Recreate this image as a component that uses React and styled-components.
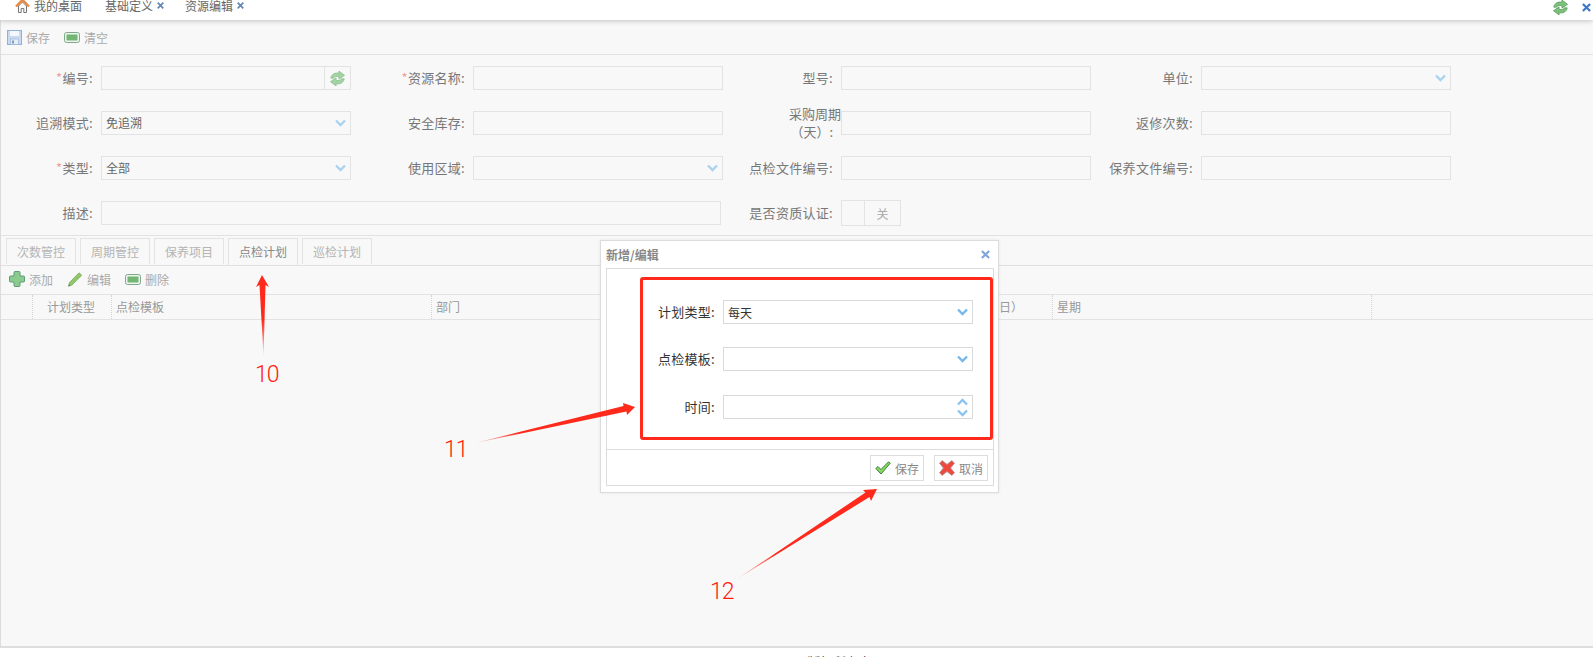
import React from 'react';
import styled, { createGlobalStyle } from 'styled-components';

const font = `"Noto Sans CJK SC", "Noto Sans", "Liberation Sans", sans-serif`;
const panel = '#f8f8f8';

const Global = createGlobalStyle`
  html, body { margin: 0; padding: 0; background: #fff; overflow: hidden; }
  * { box-sizing: border-box; }
  body { font-family: ${font}; font-size: 12px; }
`;

const Page = styled.div`
  position: relative;
  width: 1593px;
  height: 657px;
  display: flex;
  flex-direction: column;
  overflow: hidden;
`;

const TopBar = styled.header`
  position: relative;
  z-index: 2;
  flex: 0 0 20px;
  display: flex;
  justify-content: space-between;
  align-items: flex-start;
  background: #fff;
  box-shadow: 0 1px 5px rgba(0, 0, 0, 0.22);
  overflow: hidden;
`;
const TopTabs = styled.div`
  display: flex;
  align-items: flex-start;
  padding-left: 15px;
`;
const TopTab = styled.div`
  display: flex;
  align-items: center;
  gap: 4px;
  width: ${p => p.$w}px;
  height: 11px;
  line-height: 11px;
  color: #666;
  font-size: 12px;
  white-space: nowrap;
`;
const TopTools = styled.div`
  display: flex;
  align-items: center;
  gap: 13px;
  padding-right: 2px;
  height: 14px;
`;

const Main = styled.main`
  flex: 1;
  display: flex;
  flex-direction: column;
  min-height: 0;
  background: ${panel};
  border-left: 1px solid #dcdcdc;
  border-bottom: 2px solid #dedede;
`;
const Toolbar = styled.div`
  display: flex;
  align-items: center;
  gap: 14px;
  flex: 0 0 ${p => p.$h}px;
  padding-left: ${p => p.$pad}px;
  padding-bottom: ${p => p.$lift || 0}px;
  border-bottom: 1px solid #e2e2e2;
`;
const ToolButton = styled.div`
  display: flex;
  align-items: center;
  gap: 4px;
  color: #aaa;
  font-size: 12px;
`;

const Form = styled.section`
  display: grid;
  grid-template-columns: 100px 250px 122px 250px 118px 250px 110px 250px;
  grid-auto-rows: 24px;
  row-gap: 21px;
  padding: 11px 0 10px;
  border-bottom: 1px solid #e2e2e2;
`;
const Label = styled.label`
  display: flex;
  align-items: center;
  justify-content: flex-end;
  padding: 0 8px 1px 0;
  font-size: 13px;
  letter-spacing: 0.3px;
  color: #777;
  white-space: nowrap;
`;
const Star = styled.span`
  color: #f59a9a;
`;
const WrapLabel = styled.span`
  display: block;
  text-align: right;
  line-height: 18px;
  letter-spacing: 0;
`;
const WrapFirst = styled.span`
  display: block;
  margin-right: -8px;
`;
const Input = styled.div`
  display: flex;
  align-items: center;
  justify-content: space-between;
  height: 24px;
  padding: 0 4px 1px 4px;
  border: 1px solid #e3e3e3;
  background: ${panel};
  color: #666;
  font-size: 12px;
`;
const WideInput = styled(Input)`
  grid-column: span 3;
  width: 620px;
`;
const AddonInput = styled(Input)`
  padding: 0;
`;
const Addon = styled.div`
  display: flex;
  align-items: center;
  justify-content: center;
  width: 26px;
  height: 100%;
  border-left: 1px solid #e3e3e3;
`;
const Switch = styled.div`
  display: flex;
  width: 60px;
  height: 26px;
  margin-top: -1px;
  border: 1px solid #e3e3e3;
  color: #aaa;
  font-size: 12px;
`;
const SwitchKnob = styled.div`
  width: 23px;
  border-right: 1px solid #e3e3e3;
`;
const SwitchText = styled.div`
  flex: 1;
  display: flex;
  align-items: center;
  justify-content: center;
`;

const TabBar = styled.nav`
  display: flex;
  align-items: flex-start;
  gap: 4px;
  padding: 2px 0 0 5px;
  border-bottom: 1px solid #e0e0e0;
  flex: 0 0 29px;
`;
const Tab = styled.div`
  display: flex;
  align-items: center;
  justify-content: center;
  flex: 0 0 70px;
  height: ${p => (p.$active ? 27 : 26)}px;
  padding-bottom: ${p => (p.$active ? 2 : 1)}px;
  border: 1px solid #e3e3e3;
  border-bottom: none;
  background: ${panel};
  color: ${p => (p.$active ? '#888' : '#b4b4b4')};
  font-size: 12px;
`;

const HeadRow = styled.div`
  display: grid;
  grid-template-columns: 32px 79px 320px 527px 94px 319px 1fr;
  flex: 0 0 25px;
  border-bottom: 1px solid #e2e2e2;
`;
const HeadCell = styled.div`
  display: flex;
  align-items: center;
  justify-content: ${p => (p.$center ? 'center' : 'flex-start')};
  padding: 0 ${p => (p.$center ? 2 : 0)}px 1px ${p => (p.$center ? 0 : 4)}px;
  color: #999;
  font-size: 12px;
  border-right: ${p => (p.$last ? 'none' : '1px dotted #d5d5d5')};
  white-space: nowrap;
`;

const Footer = styled.footer`
  flex: 0 0 9px;
  min-height: 0;
  overflow: hidden;
  background: #fff;
  padding: 7px 0 0 807px;
  line-height: 14px;
  font-size: 13px;
  color: #444;
  white-space: nowrap;
`;

const Dialog = styled.div`
  position: absolute;
  z-index: 3;
  left: 600px;
  top: 240px;
  width: 399px;
  height: 253px;
  display: flex;
  flex-direction: column;
  padding: 0 4px 6px 5px;
  background: #fff;
  border: 1px solid #dcdcdc;
  box-shadow: 0 0 3px rgba(0, 0, 0, 0.08);
`;
const DialogHead = styled.div`
  flex: 0 0 27px;
  display: flex;
  align-items: center;
  justify-content: space-between;
  padding: 0 4px 0 0;
  font-size: 12px;
  font-weight: 700;
  color: #888;
`;
const DialogBody = styled.div`
  flex: 1;
  display: flex;
  flex-direction: column;
  border: 1px solid #dcdcdc;
`;
const Fields = styled.div`
  flex: 0 0 181px;
  display: flex;
  flex-direction: column;
  padding-top: 31px;
  gap: 23px;
  border-bottom: 1px solid #dcdcdc;
`;
const Field = styled.div`
  display: flex;
  height: 24px;
  margin-top: ${p => p.$nudge || 0}px;
`;
const FieldLabel = styled.label`
  flex: 0 0 116px;
  display: flex;
  align-items: center;
  justify-content: flex-end;
  padding: 0 8px 2px 0;
  font-size: 13px;
  letter-spacing: 0.3px;
  color: #333;
`;
const FieldInput = styled.div`
  width: 250px;
  height: 24px;
  display: flex;
  align-items: center;
  justify-content: space-between;
  padding: 0 4px;
  border: 1px solid #d9d9d9;
  color: #333;
  font-size: 12px;
`;
const Spinner = styled.div`
  display: flex;
  flex-direction: column;
  gap: 3px;
`;
const DialogFoot = styled.div`
  flex: 1;
  display: flex;
  justify-content: flex-end;
  align-items: flex-start;
  gap: 10px;
  padding: 5px 5px 0 0;
`;
const DialogButton = styled.button`
  display: flex;
  align-items: center;
  justify-content: center;
  gap: 4px;
  width: 54px;
  height: 26px;
  padding: 0;
  background: #fff;
  border: 1px solid #dcdcdc;
  color: #888;
  font-family: inherit;
  font-size: 12px;
`;

const Callout = styled.div`
  position: absolute;
  z-index: 4;
  left: 640px;
  top: 277px;
  width: 353px;
  height: 163px;
  border: 3px solid #ff2a1c;
  border-radius: 3px;
`;
const ArrowLayer = styled.svg`
  position: absolute;
  z-index: 4;
  left: 0;
  top: 0;
  pointer-events: none;
`;
const Num = styled.div`
  position: absolute;
  z-index: 4;
  left: ${p => p.$x}px;
  top: ${p => p.$y}px;
  color: #ff1a0a;
  font-family: Roboto, "Liberation Sans", sans-serif;
  font-weight: 300;
  font-size: 23px;
  line-height: 24px;
  letter-spacing: -1px;
`;

const Chevron = ({ color = '#a9d3f0', up }) => (
  <svg width="11" height="8" viewBox="0 0 11 8">
    <polyline
      points={up ? '1,6.5 5.5,2 10,6.5' : '1,1.5 5.5,6 10,1.5'}
      fill="none"
      stroke={color}
      strokeWidth="2.4"
    />
  </svg>
);
const Refresh = ({ size = 16, fill = '#a3d3a3', stroke = '#86bd8a' }) => (
  <svg width={size} height={size} viewBox="0 0 24 24">
    <path d="M2.5 11.5C3.5 5.5 9 3.5 14 4.5L14 1.5L22 7.5L14 13L14 9.5C10 8.5 7 9 6.5 11.5Z" fill={fill} stroke={stroke} strokeWidth="1" />
    <path d="M21.5 12.5C20.5 18.5 15 20.5 10 19.5L10 22.5L2 16.5L10 11L10 14.5C14 15.5 17 15 17.5 12.5Z" fill={fill} stroke={stroke} strokeWidth="1" />
  </svg>
);
const Home = () => (
  <svg width="15" height="14" viewBox="0 0 15 14">
    <path d="M3.5 7V13.5H6.2V9.5H8.8V13.5H11.5V7L7.5 3Z" fill="#fbfbfb" stroke="#777" strokeWidth="1" />
    <path d="M1 7.5L7.5 1L14 7.5" fill="none" stroke="#e9883f" strokeWidth="2.4" />
  </svg>
);
const Floppy = () => (
  <svg width="15" height="15" viewBox="0 0 15 15">
    <rect x="0.5" y="0.5" width="14" height="14" fill="#c9daf0" stroke="#8fb0da" />
    <rect x="3" y="1" width="9" height="5" fill="#f4f7fb" />
    <rect x="3.5" y="9" width="8" height="5.5" fill="#e8edf4" stroke="#8fb0da" strokeWidth="0.6" />
    <rect x="5" y="10.5" width="2" height="3" fill="#7d9cc6" />
  </svg>
);
const Minus = () => (
  <svg width="16" height="11" viewBox="0 0 16 11">
    <rect x="0.5" y="0.5" width="15" height="10" rx="2" fill="#eef5ee" stroke="#7fa98a" />
    <rect x="2.5" y="2.5" width="11" height="6" fill="#74b674" />
  </svg>
);
const Plus = () => (
  <svg width="16" height="16" viewBox="0 0 16 16">
    <path d="M5 1.5Q5 .5 6 .5H10Q11 .5 11 1.5V5H14.5Q15.5 5 15.5 6V10Q15.5 11 14.5 11H11V14.5Q11 15.5 10 15.5H6Q5 15.5 5 14.5V11H1.5Q.5 11 .5 10V6Q.5 5 1.5 5H5Z" fill="#8ccb90" stroke="#5f9d75" />
  </svg>
);
const Pencil = () => (
  <svg width="16" height="15" viewBox="0 0 16 15">
    <path d="M12 0.8L14.8 3.3L5 13L1.5 14.3L2.4 10.6Z" fill="#93c56a" stroke="#79a95a" strokeWidth="0.7" />
    <path d="M1.5 14.3L2 12.6L3.3 13.6Z" fill="#4b6b3c" />
  </svg>
);
const Check = () => (
  <svg width="16" height="14" viewBox="0 0 16 14">
    <path d="M0.8 7.5L3 5.5L6 8.5L13.5 0.8L15.3 2.2L6 13Z" fill="#84d85a" stroke="#3f7f4a" strokeWidth="1" />
  </svg>
);
const Cross = () => (
  <svg width="16" height="16" viewBox="0 0 16 16">
    <path d="M3.2 0.6L8 4.4L12.8 0.6L15.5 3.2L11.6 8L15.5 12.8L12.8 15.4L8 11.6L3.2 15.4L0.5 12.8L4.4 8L0.5 3.2Z" fill="#f0483c" stroke="#a89a9a" strokeWidth="0.9" />
  </svg>
);
const CloseX = ({ color, size = 9 }) => (
  <svg width={size} height={size} viewBox="0 0 10 10">
    <path d="M1 1L9 9M9 1L1 9" stroke={color} strokeWidth="2.4" fill="none" />
  </svg>
);

const top = [
  { t: '我的桌面', w: 90, home: true },
  { t: '基础定义', w: 80, x: true },
  { t: '资源编辑', w: 70, x: true },
];
const rows = [
  [
    { l: '编号:', star: true, addon: true },
    { l: '资源名称:', star: true },
    { l: '型号:' },
    { l: '单位:', chev: true },
  ],
  [
    { l: '追溯模式:', v: '免追溯', chev: true },
    { l: '安全库存:' },
    { wrap: true },
    { l: '返修次数:' },
  ],
  [
    { l: '类型:', star: true, v: '全部', chev: true },
    { l: '使用区域:', chev: true },
    { l: '点检文件编号:' },
    { l: '保养文件编号:' },
  ],
];
const tabs = ['次数管控', '周期管控', '保养项目', '点检计划', '巡检计划'];
const heads = [
  { t: '' },
  { t: '计划类型', center: true },
  { t: '点检模板' },
  { t: '部门' },
  { t: '周期（日）' },
  { t: '星期' },
  { t: '', last: true },
];

const FormField = ({ f }) => (
  <>
    <Label>
      {f.wrap ? (
        <WrapLabel>
          <WrapFirst>采购周期</WrapFirst>（天）:
        </WrapLabel>
      ) : (
        <>
          {f.star && <Star>*</Star>}
          {f.l}
        </>
      )}
    </Label>
    {f.addon ? (
      <AddonInput>
        <span />
        <Addon>
          <Refresh size={17} />
        </Addon>
      </AddonInput>
    ) : (
      <Input>
        <span>{f.v}</span>
        {f.chev && <Chevron />}
      </Input>
    )}
  </>
);

export default function App() {
  return (
    <Page>
      <Global />
      <TopBar>
        <TopTabs>
          {top.map(i => (
            <TopTab key={i.t} $w={i.w}>
              {i.home && <Home />}
              {i.t}
              {i.x && <CloseX color="#6487b8" size={7} />}
            </TopTab>
          ))}
        </TopTabs>
        <TopTools>
          <Refresh size={17} fill="#7cc07c" stroke="#4f9a55" />
          <CloseX color="#3a78c8" size={9} />
        </TopTools>
      </TopBar>

      <Main>
        <Toolbar $h={35} $pad={6}>
          <ToolButton><Floppy />保存</ToolButton>
          <ToolButton><Minus />清空</ToolButton>
        </Toolbar>

        <Form>
          {rows.flat().map((f, i) => (
            <FormField key={i} f={f} />
          ))}
          <Label>描述:</Label>
          <WideInput />
          <Label>是否资质认证:</Label>
          <Switch>
            <SwitchKnob />
            <SwitchText>关</SwitchText>
          </Switch>
        </Form>

        <TabBar>
          {tabs.map(t => (
            <Tab key={t} $active={t === '点检计划'}>{t}</Tab>
          ))}
        </TabBar>

        <Toolbar $h={29} $pad={8} $lift={2}>
          <ToolButton><Plus />添加</ToolButton>
          <ToolButton><Pencil />编辑</ToolButton>
          <ToolButton><Minus />删除</ToolButton>
        </Toolbar>

        <HeadRow>
          {heads.map((h, i) => (
            <HeadCell key={i} $center={h.center} $last={h.last}>{h.t}</HeadCell>
          ))}
        </HeadRow>
      </Main>

      <Footer>版权所有者</Footer>

      <Dialog>
        <DialogHead>
          新增/编辑
          <CloseX color="#80a6d8" size={9} />
        </DialogHead>
        <DialogBody>
          <Fields>
            <Field>
              <FieldLabel>计划类型:</FieldLabel>
              <FieldInput>每天<Chevron color="#74b8ee" /></FieldInput>
            </Field>
            <Field>
              <FieldLabel>点检模板:</FieldLabel>
              <FieldInput><span /><Chevron color="#74b8ee" /></FieldInput>
            </Field>
            <Field $nudge={1}>
              <FieldLabel>时间:</FieldLabel>
              <FieldInput>
                <span />
                <Spinner>
                  <Chevron color="#8cc4f0" up />
                  <Chevron color="#8cc4f0" />
                </Spinner>
              </FieldInput>
            </Field>
          </Fields>
          <DialogFoot>
            <DialogButton><Check />保存</DialogButton>
            <DialogButton><Cross />取消</DialogButton>
          </DialogFoot>
        </DialogBody>
      </Dialog>

      <Callout />

      <ArrowLayer width="1593" height="657" viewBox="0 0 1593 657">
        <defs>
          <linearGradient id="fadeA" gradientUnits="userSpaceOnUse" x1="263" y1="356" x2="262" y2="320">
            <stop offset="0" stopColor="#ff2a1c" stopOpacity="0.15" />
            <stop offset="1" stopColor="#ff2a1c" />
          </linearGradient>
          <linearGradient id="fadeB" gradientUnits="userSpaceOnUse" x1="475" y1="443" x2="520" y2="433">
            <stop offset="0" stopColor="#ff2a1c" stopOpacity="0.15" />
            <stop offset="1" stopColor="#ff2a1c" />
          </linearGradient>
          <linearGradient id="fadeC" gradientUnits="userSpaceOnUse" x1="737" y1="579" x2="775" y2="553">
            <stop offset="0" stopColor="#ff2a1c" stopOpacity="0.15" />
            <stop offset="1" stopColor="#ff2a1c" />
          </linearGradient>
        </defs>
        <polygon points="262,275 269,287 265.5,285 263.5,356 259.5,285 256,287" fill="url(#fadeA)" />
        <polygon points="635,407 627,415 626.5,411.5 475,443 623.5,406 623,403" fill="url(#fadeB)" />
        <polygon points="877,489 871,501 869.5,497 737,579 865.5,492.5 863,490" fill="url(#fadeC)" />
      </ArrowLayer>
      <Num $x={255} $y={363}>10</Num>
      <Num $x={444} $y={438}>11</Num>
      <Num $x={710} $y={580}>12</Num>
    </Page>
  );
}
